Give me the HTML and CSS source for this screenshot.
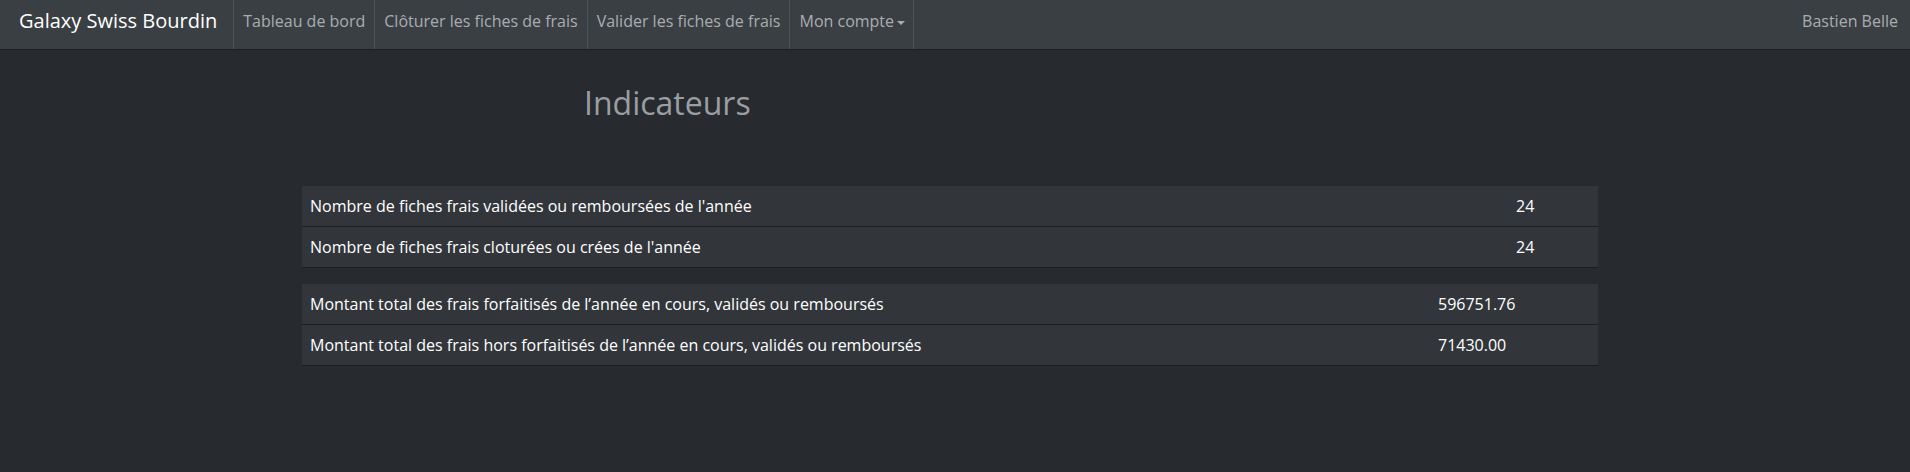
FILE: index.html
```html
<!DOCTYPE html>
<html lang="fr">
<head>
<meta charset="utf-8">
<title>Indicateurs - Galaxy Swiss Bourdin</title>
<link rel="stylesheet" href="styles.css">
</head>
<body>
<nav class="navbar">
  <a class="brand" href="#">Galaxy Swiss Bourdin</a>
  <ul class="nav">
    <li><a href="#">Tableau de bord</a></li>
    <li><a href="#">Clôturer les fiches de frais</a></li>
    <li><a href="#">Valider les fiches de frais</a></li>
    <li class="last"><a href="#">Mon compte<span class="caret"></span></a></li>
  </ul>
  <a class="user" href="#">Bastien Belle</a>
</nav>
<main class="page">
  <h1 class="title">Indicateurs</h1>
  <table class="stats stats-count">
    <tbody>
      <tr><td>Nombre de fiches frais validées ou remboursées de l'année</td><td class="val">24</td></tr>
      <tr><td>Nombre de fiches frais cloturées ou crées de l'année</td><td class="val">24</td></tr>
    </tbody>
  </table>
  <table class="stats stats-amount">
    <tbody>
      <tr><td>Montant total des frais forfaitisés de l’année en cours, validés ou remboursés</td><td class="val">596751.76</td></tr>
      <tr><td>Montant total des frais hors forfaitisés de l’année en cours, validés ou remboursés</td><td class="val">71430.00</td></tr>
    </tbody>
  </table>
</main>
</body>
</html>
```
FILE: styles.css
```css
* { box-sizing: border-box; }
html, body {
  margin: 0;
  padding: 0;
}
body {
  background: #272b30;
  font-family: "Open Sans", "Noto Sans", sans-serif;
  font-size: 16px;
  color: #fff;
}
a { text-decoration: none; }

.navbar {
  display: flex;
  align-items: stretch;
  height: 50px;
  background: #3a3f44;
  border-bottom: 1px solid #1c1e22;
}
.brand {
  display: block;
  padding: 10.5px 16px 0 19px;
  font-size: 20px;
  line-height: 20px;
  color: #fff;
  white-space: nowrap;
}
.nav {
  display: flex;
  list-style: none;
  margin: 0;
  padding: 0;
}
.nav li {
  border-left: 1px solid #4e5358;
}
.nav li.last {
  border-right: 1px solid #4e5358;
}
.nav a, .user {
  display: block;
  height: 49px;
  padding: 11px 9px 0 9px;
  line-height: 20px;
  font-size: 16px;
  color: #aaadb0;
  white-space: nowrap;
}
.caret {
  display: inline-block;
  width: 0;
  height: 0;
  margin-left: 3px;
  vertical-align: middle;
  border-top: 4px solid #aaadb0;
  border-left: 4px solid transparent;
  border-right: 4px solid transparent;
}
.last a {
  padding-right: 8px;
}
.user {
  margin-left: auto;
  padding-right: 12px;
}

.page {
  width: 1296px;
  margin-left: 302px;
  padding-top: 35px;
}
.title {
  margin: 0 0 65px 282px;
  font-size: 32px;
  line-height: 36px;
  font-weight: 400;
  color: #9a9ea2;
}
.stats {
  width: 100%;
  border-collapse: collapse;
  table-layout: fixed;
  margin-bottom: 16px;
}
.stats td {
  background: #32363b;
  border-bottom: 1px solid #1c1e22;
  padding: 9px 8px;
  line-height: 22px;
  color: #fff;
  white-space: nowrap;
}
.stats-count .val { width: 90px; }
.stats-amount .val { width: 168px; }
```
